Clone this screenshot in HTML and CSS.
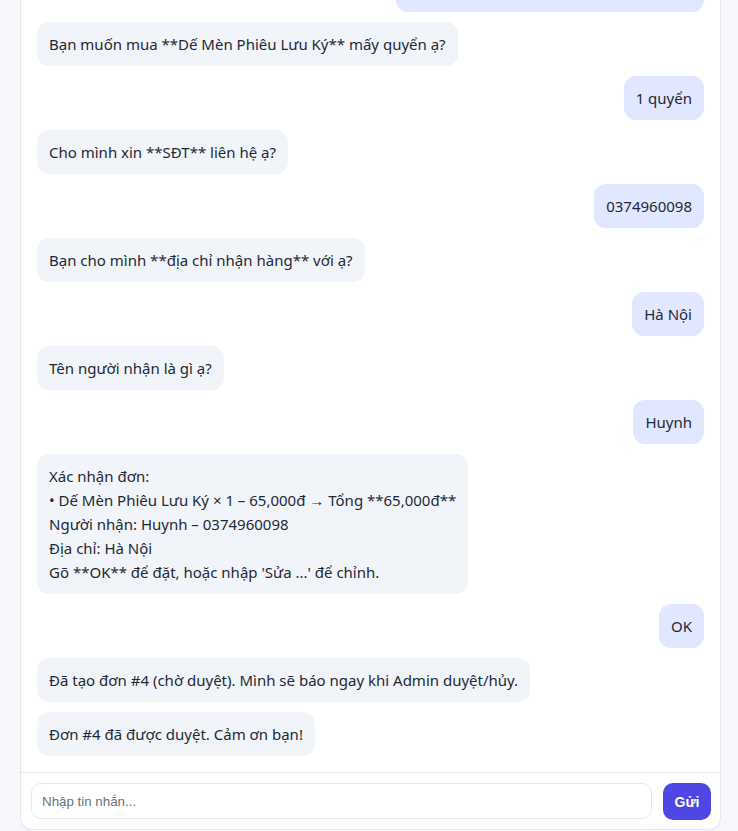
FILE: index.html
```html
<!DOCTYPE html>
<html lang="vi">
<head>
<meta charset="utf-8">
<title>Chat</title>
<link rel="stylesheet" href="styles.css">
</head>
<body>
<div class="chat">
  <div class="messages">
    <div class="msg user">Mình muốn mua Dế Mèn Phiêu Lưu Ký ạ</div>
    <div class="msg bot">Bạn muốn mua **Dế Mèn Phiêu Lưu Ký** mấy quyển ạ?</div>
    <div class="msg user">1 quyển</div>
    <div class="msg bot">Cho mình xin **SĐT** liên hệ ạ?</div>
    <div class="msg user">0374960098</div>
    <div class="msg bot">Bạn cho mình **địa chỉ nhận hàng** với ạ?</div>
    <div class="msg user">Hà Nội</div>
    <div class="msg bot">Tên người nhận là gì ạ?</div>
    <div class="msg user">Huynh</div>
    <div class="msg bot">Xác nhận đơn:
• Dế Mèn Phiêu Lưu Ký × 1 – 65,000đ → Tổng **65,000đ**
Người nhận: Huynh – 0374960098
Địa chỉ: Hà Nội
Gõ **OK** để đặt, hoặc nhập 'Sửa ...' để chỉnh.</div>
    <div class="msg user">OK</div>
    <div class="msg bot">Đã tạo đơn #4 (chờ duyệt). Mình sẽ báo ngay khi Admin duyệt/hủy.</div>
    <div class="msg bot">Đơn #4 đã được duyệt. Cảm ơn bạn!</div>
  </div>
  <form class="composer">
    <input class="composer-input" type="text" placeholder="Nhập tin nhắn...">
    <button class="composer-send" type="button">Gửi</button>
  </form>
</div>
</body>
</html>
```
FILE: styles.css
```css
* { box-sizing: border-box; }
html, body { margin: 0; padding: 0; }
body {
  background: #f5f7fb;
  font-family: "Noto Sans", "Open Sans", sans-serif;
  color: #1f2937;
  height: 831px;
  overflow: hidden;
}
.chat {
  width: 701px;
  margin: 0 0 0 20px;
  height: 830px;
  background: #ffffff;
  border: 1px solid #e5e7eb;
  border-top: none;
  border-radius: 0 0 12px 12px;
  display: flex;
  flex-direction: column;
  overflow: hidden;
}
.messages {
  flex: 1;
  min-height: 0;
  overflow: hidden;
  display: flex;
  flex-direction: column;
  justify-content: flex-end;
  gap: 10px;
  padding: 0 16px 16px;
}
.msg {
  flex: none;
  max-width: 75%;
  padding: 10px 12px;
  border-radius: 12px;
  font-size: 15px;
  line-height: 24px;
  white-space: pre-wrap;
}
.bot {
  align-self: flex-start;
  background: #f1f5f9;
}
.user {
  align-self: flex-end;
  background: #e0e7ff;
}
.composer {
  display: flex;
  gap: 11px;
  padding: 10px 9px 9px 10px;
  border-top: 1px solid #e5e7eb;
  margin: 0;
}
.composer-input {
  flex: 1;
  height: 36px;
  border: 1px solid #e5e7eb;
  border-radius: 10px;
  padding: 0 10px;
  font-family: "Liberation Sans", Arial, sans-serif;
  font-size: 13.33px;
  color: #111827;
  outline: none;
}
.composer-input::placeholder { color: #6b7280; }
.composer-send {
  width: 48px;
  height: 37px;
  border: none;
  border-radius: 10px;
  background: #4f46e5;
  color: #ffffff;
  font-family: "Liberation Sans", Arial, sans-serif;
  font-size: 14px;
  font-weight: 600;
  cursor: pointer;
}
```
